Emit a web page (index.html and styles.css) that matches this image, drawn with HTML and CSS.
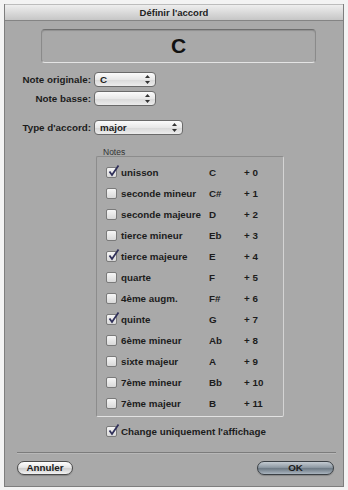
FILE: index.html
```html
<!DOCTYPE html>
<html lang="fr">
  <head>
    <meta charset="UTF-8" />
    <meta name="viewport" content="width=device-width, initial-scale=1.0" />
    <title>Définir l'accord</title>
    <link rel="stylesheet" href="styles.css">
  </head>
  <body>
    <div class="window">
      <div class="titlebar">Définir l'accord</div>

      <div class="chord-display">C</div>

      <div class="form-row">
        <label>Note originale:</label>
        <div class="popup"><span>C</span><svg class="arrows" width="5" height="9" viewBox="0 0 5 9"><path d="M2.5 0 L5 3 L0 3 Z M2.5 9 L5 6 L0 6 Z" fill="#333"/></svg></div>
      </div>
      <div class="form-row row-basse">
        <label>Note basse:</label>
        <div class="popup"><span></span><svg class="arrows" width="5" height="9" viewBox="0 0 5 9"><path d="M2.5 0 L5 3 L0 3 Z M2.5 9 L5 6 L0 6 Z" fill="#333"/></svg></div>
      </div>
      <div class="form-row row-type">
        <label>Type d'accord:</label>
        <div class="popup popup-wide"><span>major</span><svg class="arrows" width="5" height="9" viewBox="0 0 5 9"><path d="M2.5 0 L5 3 L0 3 Z M2.5 9 L5 6 L0 6 Z" fill="#333"/></svg></div>
      </div>

      <div class="group-label">Notes</div>
      <div class="notes-group">
        <div class="note-row"><span class="checkbox checked"></span><span>unisson</span><span>C</span><span>+ 0</span></div>
        <div class="note-row"><span class="checkbox"></span><span>seconde mineur</span><span>C#</span><span>+ 1</span></div>
        <div class="note-row"><span class="checkbox"></span><span>seconde majeure</span><span>D</span><span>+ 2</span></div>
        <div class="note-row"><span class="checkbox"></span><span>tierce mineur</span><span>Eb</span><span>+ 3</span></div>
        <div class="note-row"><span class="checkbox checked"></span><span>tierce majeure</span><span>E</span><span>+ 4</span></div>
        <div class="note-row"><span class="checkbox"></span><span>quarte</span><span>F</span><span>+ 5</span></div>
        <div class="note-row"><span class="checkbox"></span><span>4ème augm.</span><span>F#</span><span>+ 6</span></div>
        <div class="note-row"><span class="checkbox checked"></span><span>quinte</span><span>G</span><span>+ 7</span></div>
        <div class="note-row"><span class="checkbox"></span><span>6ème mineur</span><span>Ab</span><span>+ 8</span></div>
        <div class="note-row"><span class="checkbox"></span><span>sixte majeur</span><span>A</span><span>+ 9</span></div>
        <div class="note-row"><span class="checkbox"></span><span>7ème mineur</span><span>Bb</span><span>+ 10</span></div>
        <div class="note-row"><span class="checkbox"></span><span>7ème majeur</span><span>B</span><span>+ 11</span></div>
      </div>

      <div class="check-row"><span class="checkbox checked"></span><span>Change uniquement l'affichage</span></div>

      <div class="separator"></div>

      <div class="buttons">
        <button class="btn">Annuler</button>
        <button class="btn btn-default">OK</button>
      </div>
    </div>
  </body>
</html>
```

FILE: styles.css
```css
html, body {
  margin: 0;
  padding: 0;
  background-color: #f3f3f3;
}
body {
  padding: 4px 4px 0 4px;
  font-family: "Liberation Sans", Arial, sans-serif;
  font-size: 9.8px;
  font-weight: bold;
  color: #1c1c1c;
}
.window {
  width: 338px;
  height: 482px;
  background-color: #a9a9a9;
  border: 1px solid #7e7e7e;
  border-top: none;
  display: flex;
  flex-direction: column;
}
.titlebar {
  height: 17px;
  line-height: 16px;
  box-sizing: border-box;
  text-align: center;
  font-size: 9.5px;
  color: #222;
  background: linear-gradient(#eeeeee, #d6d6d6 60%, #c6c6c6);
  border-top: 1px solid #bcbcbc;
  border-bottom: 1px solid #848484;
}
.chord-display {
  margin: 8px 0 0 36px;
  width: 275px;
  height: 34px;
  box-sizing: border-box;
  border: 1px solid #8a8a8a;
  border-top-color: #6e6e6e;
  border-bottom-color: #e4e4e4;
  border-radius: 4px;
  box-shadow: inset 0 1px 1px rgba(0, 0, 0, 0.15);
  text-align: center;
  font-size: 21px;
  line-height: 31px;
  color: #111;
}
.form-row {
  display: flex;
  align-items: center;
  margin-top: 9px;
  height: 15px;
}
.row-basse {
  margin-top: 4px;
}
.row-type {
  margin-top: 14px;
}
.form-row label {
  width: 86px;
  margin-right: 3px;
  text-align: right;
}
.popup {
  width: 62px;
  height: 15px;
  box-sizing: border-box;
  border: 1px solid #6a6a6a;
  border-radius: 4px;
  background: linear-gradient(#fbfbfb, #e8e8e8 50%, #d8d8d8 51%, #ececec);
  display: flex;
  align-items: center;
  justify-content: space-between;
  padding: 0 5px 0 5px;
}
.popup-wide {
  width: 89px;
}
.arrows {
  display: block;
}
.group-label {
  margin: 12px 0 0 98px;
  height: 10px;
  line-height: 10px;
  font-size: 8.5px;
  font-weight: normal;
  color: #333;
}
.notes-group {
  margin: -1px 0 0 91px;
  width: 188px;
  box-sizing: border-box;
  border: 1px solid #8c8c8c;
  border-right-color: #d4d4d4;
  border-bottom-color: #e2e2e2;
  border-radius: 2px;
  padding: 5px 0 2px 9px;
}
.note-row {
  display: grid;
  grid-template-columns: 11px 84px 31px auto;
  column-gap: 4px;
  align-items: center;
  height: 21px;
}
.checkbox {
  position: relative;
  display: block;
  width: 11px;
  height: 11px;
  box-sizing: border-box;
  border: 1px solid #7a7a7a;
  border-radius: 2px;
  background: linear-gradient(#f6f6f6, #d9d9d9);
}
.checkbox.checked::after {
  content: "";
  position: absolute;
  left: 1px;
  top: -3px;
  width: 12px;
  height: 12px;
  background: url("data:image/svg+xml;utf8,<svg xmlns='http://www.w3.org/2000/svg' width='12' height='12' viewBox='0 0 12 12'><path d='M1.5 6.5 L4 10 L10.5 0.5' fill='none' stroke='%2330305a' stroke-width='1.8'/></svg>") no-repeat;
}
.check-row {
  display: flex;
  align-items: center;
  gap: 4px;
  margin: 7px 0 0 101px;
  height: 14px;
}
.separator {
  margin: 14px 0 0 12px;
  width: 319px;
  height: 1px;
  background-color: #7c7c7c;
  border-bottom: 1px solid #b8b8b8;
}
.buttons {
  display: flex;
  justify-content: space-between;
  margin: 7px 9px 0 12px;
}
.btn {
  height: 14px;
  padding: 0;
  border: 1px solid #4a4a4a;
  border-radius: 7px;
  font-family: "Liberation Sans", Arial, sans-serif;
  font-size: 9.8px;
  font-weight: bold;
  color: #1c1c1c;
  line-height: 12px;
  width: 56px;
  background: linear-gradient(#ffffff, #e6e6e6 45%, #cfcfcf 55%, #f2f2f2);
  box-shadow: 0 1px 1px rgba(0, 0, 0, 0.2);
}
.btn-default {
  width: 77px;
  background: linear-gradient(#c4cbd2, #8f9aa4 45%, #6e7a85 55%, #a9b4be);
  border-color: #3a3f44;
}
```
